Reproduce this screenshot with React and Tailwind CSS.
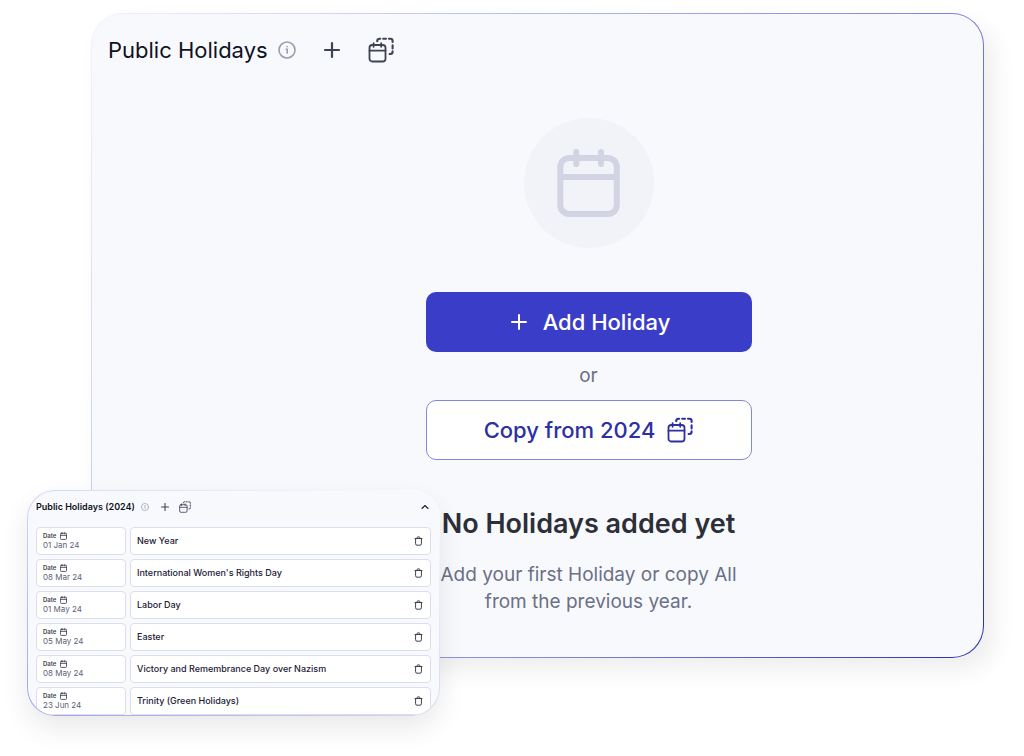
import React from 'react';
import { ChevronUp, Plus } from 'lucide-react';
import clsx from 'clsx';

const holidays = [
    { date: '01 Jan 24', name: 'New Year' },
    { date: '08 Mar 24', name: "International Women's Rights Day" },
    { date: '01 May 24', name: 'Labor Day' },
    { date: '05 May 24', name: 'Easter' },
    { date: '08 May 24', name: 'Victory and Remembrance Day over Nazism' },
    { date: '23 Jun 24', name: 'Trinity (Green Holidays)' },
];

const InfoIcon = ({ className }) => (
    <svg viewBox="0 0 18 18" fill="none" stroke="currentColor" strokeWidth="1.6" strokeLinecap="round" className={className} aria-hidden="true">
        <circle cx="9" cy="9" r="8" />
        <path d="M8.3 8.3h.9v3.8" />
        <circle cx="9" cy="5.7" r="0.5" fill="currentColor" strokeWidth="0.6" />
    </svg>
);

// Calendar in front of a dashed copy of itself
const CopyCalendarIcon = ({ className }) => (
    <svg viewBox="0 0 26 26" fill="none" stroke="currentColor" strokeLinecap="round" strokeLinejoin="round" className={className} aria-hidden="true">
        <g strokeWidth="1.8">
            <rect x="1.5" y="8" width="16" height="16.5" rx="2.8" />
            <path d="M1.5 13.7h16M5.6 6.2v3.6M13.2 6.2v3.6" />
        </g>
        <path
            strokeWidth="2.1"
            d="M9.2 4.2a2.4 2.4 0 0 1 2.4-2.4h.6M15.2 1.8h2.8M21 1.8h1.4a2.2 2.2 0 0 1 2.2 2.2v1M24.6 8.4v3M24.6 14.4v.4a2.2 2.2 0 0 1-2.2 2.2h-.8"
        />
    </svg>
);

const CalendarIcon = ({ className, strokeWidth = 6 }) => (
    <svg viewBox="0 0 64 72" fill="none" stroke="currentColor" strokeWidth={strokeWidth} strokeLinecap="round" className={className} aria-hidden="true">
        <rect x="3.3" y="11" width="56.5" height="56" rx="9" />
        <path d="M4 30h55M19.3 5v12M44 5v12" />
    </svg>
);

const TrashIcon = ({ className }) => (
    <svg viewBox="0 0 10 12" fill="none" stroke="currentColor" strokeWidth="1.2" strokeLinecap="round" strokeLinejoin="round" className={className} aria-hidden="true">
        <path d="M.8 3h8.4M1.5 3v6.4a1.6 1.6 0 0 0 1.6 1.6h3.8a1.6 1.6 0 0 0 1.6-1.6V3M3.2 3v-.7A1.3 1.3 0 0 1 4.5 1h1a1.3 1.3 0 0 1 1.3 1.3V3" />
    </svg>
);

const IconButton = ({ label, className, children }) => (
    <button type="button" aria-label={label} className={clsx('flex shrink-0 items-center justify-center', className)}>
        {children}
    </button>
);

const HolidayRow = ({ date, name }) => (
    <li className="flex h-7 shrink-0 gap-1">
        <div className="flex w-[90px] flex-col justify-center rounded border border-[#dcdeee] bg-white px-1.5">
            <span className="flex items-center gap-1 text-[6px] leading-[8px] font-semibold text-[#3f4254]">
                Date
                <CalendarIcon className="h-2 w-[7px]" strokeWidth={8} />
            </span>
            <span className="text-[8px] leading-[10px] text-[#5d6278]">{date}</span>
        </div>
        <div className="flex flex-1 items-center justify-between rounded border border-[#dcdeee] bg-white px-1.5">
            <span className="text-[9px] leading-4 font-medium text-[#1c2033]">{name}</span>
            <IconButton label={`Delete ${name}`} className="w-3 text-[#3f4254]">
                <TrashIcon className="h-2.5 w-[9px]" />
            </IconButton>
        </div>
    </li>
);

const PreviousYearCard = () => (
    <section className="absolute top-[490px] left-[27px] w-[413px] rounded-[28px] bg-linear-to-tr from-[#a0a2ea] via-[#d6d7f6] to-white p-px shadow-[0_12px_28px_rgba(0,0,0,0.09)]">
        <div className="h-56 overflow-hidden rounded-[27px] bg-[#f8f9fd] px-2">
            <header className="flex h-9 items-center pb-1">
                <h2 className="text-[9px] leading-4 font-semibold text-[#0f1222]">Public Holidays (2024)</h2>
                <InfoIcon className="ml-1.5 size-2 text-[#9a9cb0]" />
                <IconButton label="Add holiday to 2024" className="ml-2.5 text-[#3f4254]">
                    <Plus className="size-3" strokeWidth={2.2} />
                </IconButton>
                <IconButton label="Copy 2024 holidays" className="ml-2 text-[#3f4254]">
                    <CopyCalendarIcon className="size-3" />
                </IconButton>
                <IconButton label="Collapse" className="ml-auto text-[#1c2033]">
                    <ChevronUp className="size-3" strokeWidth={2.2} />
                </IconButton>
            </header>
            <ul className="flex flex-col gap-1">
                {holidays.map((holiday) => (
                    <HolidayRow key={holiday.date} {...holiday} />
                ))}
            </ul>
        </div>
    </section>
);

const App = () => {
    return (
        <main className="relative min-h-screen bg-white pt-[13px] pr-10 pb-24 pl-[91px] font-['Inter',sans-serif]">
            <section className="rounded-[32px] bg-linear-120 from-[#f4f4fc] via-[#8688dd] via-65% to-[#2a2dae] p-px shadow-[10px_12px_24px_rgba(0,0,0,0.07)]">
                <div className="rounded-[31px] bg-[#f8f9fd] px-4 pt-5 pb-[42px]">
                    <header className="flex h-8 items-center">
                        <h1 className="text-[22px] leading-8 text-[#0f1222]">Public Holidays</h1>
                        <InfoIcon className="ml-2.5 size-[18px] text-[#9a9cb0]" />
                        <IconButton label="Add holiday" className="ml-6 text-[#3f4254]">
                            <Plus className="size-6" strokeWidth={2.2} />
                        </IconButton>
                        <IconButton label="Copy holidays" className="ml-6 text-[#3f4254]">
                            <CopyCalendarIcon className="size-[26px]" />
                        </IconButton>
                    </header>

                    {/* Empty state */}
                    <div className="mt-[52px] flex flex-col items-center pl-[102px]">
                        <div className="flex size-[130px] items-center justify-center rounded-full bg-[#f2f3f8] text-[#d2d3e3]">
                            <CalendarIcon className="h-[72px] w-16" />
                        </div>
                        <button type="button" className="mt-11 flex h-[60px] w-[326px] items-center justify-center gap-3 rounded-[10px] bg-[#3a3dc8] text-[22px] leading-8 font-medium text-white">
                            <Plus className="size-6" strokeWidth={2} />
                            Add Holiday
                        </button>
                        <p className="my-2.5 text-[19px] leading-7 text-[#6b7085]">or</p>
                        <button type="button" className="flex h-[60px] w-[326px] items-center justify-center gap-3 rounded-[10px] border border-[#8587dd] bg-white text-[22px] leading-8 font-medium text-[#2d30a3]">
                            Copy from 2024
                            <CopyCalendarIcon className="size-[26px]" />
                        </button>
                        <h2 className="mt-11 text-[27px] leading-10 font-semibold text-[#2d2f38]">No Holidays added yet</h2>
                        <p className="mt-[17px] w-80 text-center text-[19px] leading-[27px] text-[#6b7085]">
                            Add your first Holiday or copy All from the previous year.
                        </p>
                    </div>
                </div>
            </section>
            <PreviousYearCard />
        </main>
    );
};

export default App;
